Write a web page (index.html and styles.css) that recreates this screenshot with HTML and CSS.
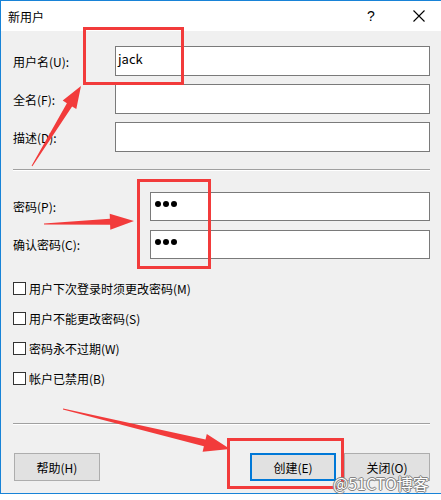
FILE: index.html
```html
<!DOCTYPE html>
<html lang="zh-CN">
<head>
    <meta charset="UTF-8">
    <meta name="viewport" content="width=device-width, initial-scale=1.0">
    <title>新用户</title>
    <link rel="stylesheet" href="styles.css">
</head>
<body>
    <div class="window">
        <div class="titlebar">
            <span class="title">新用户</span>
            <span class="help">?</span>
            <span class="close">
                <svg width="12" height="12" viewBox="0 0 12 12"><path d="M0.5 0.5 L11.5 11.5 M11.5 0.5 L0.5 11.5" stroke="#000" stroke-width="1.1" fill="none"/></svg>
            </span>
        </div>

        <div class="content">
            <div class="fields">
                <div class="row"><label>用户名(U):</label><div class="box">jack</div></div>
                <div class="row"><label>全名(F):</label><div class="box"></div></div>
                <div class="row"><label>描述(D):</label><div class="box"></div></div>
            </div>

            <div class="sep sep-top"></div>

            <div class="fields pw">
                <div class="row"><label>密码(P):</label><div class="box"><span class="dot"></span><span class="dot"></span><span class="dot"></span></div></div>
                <div class="row"><label>确认密码(C):</label><div class="box"><span class="dot"></span><span class="dot"></span><span class="dot"></span></div></div>
            </div>

            <div class="checks">
                <div class="check"><span class="tick"></span>用户下次登录时须更改密码(M)</div>
                <div class="check"><span class="tick"></span>用户不能更改密码(S)</div>
                <div class="check"><span class="tick"></span>密码永不过期(W)</div>
                <div class="check"><span class="tick"></span>帐户已禁用(B)</div>
            </div>

            <div class="sep sep-bottom"></div>

            <div class="buttons">
                <button class="btn">帮助(H)</button>
                <div class="btn-group">
                    <button class="btn btn-default">创建(E)</button>
                    <button class="btn">关闭(O)</button>
                </div>
            </div>
        </div>

        <!-- red annotations drawn on top of the screenshot -->
        <svg class="marks" width="441" height="500" viewBox="0 0 441 500">
            <g fill="none" stroke="#f23b3b" stroke-width="3">
                <rect x="84.5" y="28.5" width="98" height="55"/>
                <rect x="138.5" y="180.5" width="71" height="87"/>
                <rect x="228.5" y="439.5" width="114" height="48"/>
            </g>
            <g fill="#f23b3b">
                <polygon points="32.4,166.3 72.1,106.4 76.3,109.0 81,86 62.7,100.6 66.9,103.2 31.6,165.7"/>
                <polygon points="44,224.5 110.1,224.8 110.3,229.8 134,221 109.7,213.8 109.9,218.8 44,223.5"/>
                <polygon points="62.9,409.5 203.9,446.3 202.6,451.7 230,449 206.8,434.1 205.5,439.5 63.1,408.5"/>
            </g>
        </svg>

        <div class="watermark">@51CTO博客</div>
    </div>
</body>
</html>
```

FILE: styles.css
```css
* { box-sizing: border-box; }
body { margin: 0; background: #fff; font-family: "Noto Sans CJK SC", "Noto Sans", sans-serif; font-size: 12px; color: #000; }

.window { position: relative; width: 441px; height: 494px; border-top: 1px solid #1883d7; border-left: 1px solid #1883d7; border-bottom: 1px solid #1883d7; background: #f0f0f0; }

.titlebar { height: 30px; background: #fff; display: flex; align-items: center; padding-left: 7px; }
.title { flex: 1; font-size: 12px; }
.help { width: 14px; font-size: 14px; font-family: "Liberation Sans", sans-serif; margin-right: 32px; }
.close { width: 12px; height: 12px; margin-right: 16px; display: flex; }

.content { padding: 15px 11px 0 12px; }

.fields { display: flex; flex-direction: column; gap: 8px; }
.fields.pw { gap: 9px; margin-top: 21px; }
.row { display: flex; align-items: center; height: 30px; }
.fields.pw .row { height: 29px; }
.row label { width: 102px; flex-shrink: 0; }
.fields.pw .row label { width: 137px; }
.box { flex: 1; height: 100%; background: #fff; border: 1px solid #7a7a7a; padding: 3px 2px; font-size: 13px; line-height: 17px; display: flex; align-items: flex-start; }
.fields.pw .box { padding: 8px 4px; gap: 2px; }
.dot { width: 6px; height: 6px; border-radius: 50%; background: #000; }

.sep { height: 2px; border-top: 1px solid #a0a0a0; border-bottom: 1px solid #fff; }
.sep-top { margin-top: 17px; }
.sep-bottom { margin-top: 30px; }

.checks { margin-top: 14px; }
.check { height: 30px; display: flex; align-items: center; }
.tick { width: 13px; height: 13px; background: #fff; border: 1px solid #333; margin-right: 3px; }

.buttons { display: flex; justify-content: space-between; margin-top: 28px; padding-left: 1px; }
.btn-group { display: flex; gap: 8px; }
.btn { width: 86px; height: 28px; background: #e1e1e1; border: 1px solid #adadad; font-family: inherit; font-size: 12px; color: #000; padding: 0; }
.btn-default { border: 2px solid #0078d7; }

.marks { position: absolute; left: -1px; top: -1px; pointer-events: none; }
.watermark { position: absolute; left: 332px; top: 470px; font-size: 16px; color: #fff; text-shadow: 0 0 1px #666, 1px 0 0 #888, -1px 0 0 #888, 0 1px 0 #888, 0 -1px 0 #888; }
```
